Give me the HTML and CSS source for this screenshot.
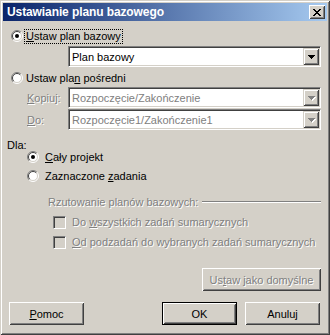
FILE: index.html
```html
<!DOCTYPE html>
<html lang="pl">
<head>
  <meta charset="UTF-8" />
  <title>Ustawianie planu bazowego</title>
  <link rel="stylesheet" href="styles.css">
</head>
<body>
  <div class="window">
    <div class="titlebar">
      <span class="title">Ustawianie planu bazowego</span>
      <button class="close" title="Zamknij">
        <svg width="8" height="7" viewBox="0 0 8 7"><path d="M0 0h2v1h-2z M6 0h2v1h-2z M1 1h2v1h-2z M5 1h2v1h-2z M2 2h4v1h-4z M3 3h2v1h-2z M2 4h4v1h-4z M1 5h2v1h-2z M5 5h2v1h-2z M0 6h2v1h-2z M6 6h2v1h-2z" fill="#000"/></svg>
      </button>
    </div>

    <div class="client">
      <div class="option opt-first">
        <span class="radio">
          <svg width="12" height="12" viewBox="0 0 12 12"><circle cx="6" cy="6" r="5" fill="#fff"/><path d="M9.9 2.1A5.5 5.5 0 0 0 2.1 9.9" fill="none" stroke="#808080"/><path d="M2.1 9.9A5.5 5.5 0 0 0 9.9 2.1" fill="none" stroke="#fff"/><path d="M9.2 2.8A4.5 4.5 0 0 0 2.8 9.2" fill="none" stroke="#404040"/><path d="M2.8 9.2A4.5 4.5 0 0 0 9.2 2.8" fill="none" stroke="#d4d0c8"/><circle cx="6" cy="6" r="2" fill="#000"/></svg>
        </span>
        <span class="label focus"><u>U</u>staw plan bazowy</span>
      </div>

      <div class="combo combo-first">
        <span class="combo-text">Plan bazowy</span>
        <span class="drop"><svg width="7" height="4" viewBox="0 0 7 4"><path d="M0 0h7v1h-1v1h-1v1h-1v1h-1v-1h-1v-1h-1v-1h-1z" fill="#000"/></svg></span>
      </div>

      <div class="option opt-second">
        <span class="radio">
          <svg width="12" height="12" viewBox="0 0 12 12"><circle cx="6" cy="6" r="5" fill="#fff"/><path d="M9.9 2.1A5.5 5.5 0 0 0 2.1 9.9" fill="none" stroke="#808080"/><path d="M2.1 9.9A5.5 5.5 0 0 0 9.9 2.1" fill="none" stroke="#fff"/><path d="M9.2 2.8A4.5 4.5 0 0 0 2.8 9.2" fill="none" stroke="#404040"/><path d="M2.8 9.2A4.5 4.5 0 0 0 9.2 2.8" fill="none" stroke="#d4d0c8"/></svg>
        </span>
        <span class="label">Ustaw pla<u>n</u> pośredni</span>
      </div>

      <div class="field field-copy">
        <span class="field-label disabled"><u>K</u>opiuj:</span>
        <div class="combo combo-off">
          <span class="combo-text">Rozpoczęcie/Zakończenie</span>
          <span class="drop"><svg width="8" height="5" viewBox="0 0 8 5"><path d="M1 1h7v1h-1v1h-1v1h-1v1h-1v-1h-1v-1h-1v-1h-1z" fill="#fff"/><path d="M0 0h7v1h-1v1h-1v1h-1v1h-1v-1h-1v-1h-1v-1h-1z" fill="#808080"/></svg></span>
        </div>
      </div>

      <div class="field field-to">
        <span class="field-label disabled"><u>D</u>o:</span>
        <div class="combo combo-off">
          <span class="combo-text">Rozpoczęcie1/Zakończenie1</span>
          <span class="drop"><svg width="8" height="5" viewBox="0 0 8 5"><path d="M1 1h7v1h-1v1h-1v1h-1v1h-1v-1h-1v-1h-1v-1h-1z" fill="#fff"/><path d="M0 0h7v1h-1v1h-1v1h-1v1h-1v-1h-1v-1h-1v-1h-1z" fill="#808080"/></svg></span>
        </div>
      </div>

      <div class="group-title">Dla:</div>

      <div class="option sub opt-all">
        <span class="radio">
          <svg width="12" height="12" viewBox="0 0 12 12"><circle cx="6" cy="6" r="5" fill="#fff"/><path d="M9.9 2.1A5.5 5.5 0 0 0 2.1 9.9" fill="none" stroke="#808080"/><path d="M2.1 9.9A5.5 5.5 0 0 0 9.9 2.1" fill="none" stroke="#fff"/><path d="M9.2 2.8A4.5 4.5 0 0 0 2.8 9.2" fill="none" stroke="#404040"/><path d="M2.8 9.2A4.5 4.5 0 0 0 9.2 2.8" fill="none" stroke="#d4d0c8"/><circle cx="6" cy="6" r="2" fill="#000"/></svg>
        </span>
        <span class="label"><u>C</u>ały projekt</span>
      </div>

      <div class="option sub opt-selected">
        <span class="radio">
          <svg width="12" height="12" viewBox="0 0 12 12"><circle cx="6" cy="6" r="5" fill="#fff"/><path d="M9.9 2.1A5.5 5.5 0 0 0 2.1 9.9" fill="none" stroke="#808080"/><path d="M2.1 9.9A5.5 5.5 0 0 0 9.9 2.1" fill="none" stroke="#fff"/><path d="M9.2 2.8A4.5 4.5 0 0 0 2.8 9.2" fill="none" stroke="#404040"/><path d="M2.8 9.2A4.5 4.5 0 0 0 9.2 2.8" fill="none" stroke="#d4d0c8"/></svg>
        </span>
        <span class="label">Zaznaczone <u>z</u>adania</span>
      </div>

      <div class="rollup">
        <span class="disabled">Rzutowanie planów bazowych:</span>
        <span class="etched"></span>
      </div>

      <div class="check-row check-first">
        <span class="check"></span>
        <span class="label disabled">Do <u>w</u>szystkich zadań sumarycznych</span>
      </div>

      <div class="check-row check-second">
        <span class="check"></span>
        <span class="label disabled"><u>O</u>d podzadań do wybranych zadań sumarycznych</span>
      </div>

      <button class="btn btn-wide" disabled><span class="disabled">Us<u>t</u>aw jako domyślne</span></button>

      <div class="buttons">
        <button class="btn btn-help"><u>P</u>omoc</button>
        <div class="btn-group">
          <button class="btn btn-primary">OK</button>
          <button class="btn">Anuluj</button>
        </div>
      </div>
    </div>
  </div>
</body>
</html>
```

FILE: styles.css
```css
* {
    margin: 0;
    padding: 0;
    box-sizing: border-box;
}

body {
    font-family: "Liberation Sans", Arial, sans-serif;
    font-size: 11px;
    color: #000;
    background: #fff;
}

.window {
    width: 330px;
    height: 335px;
    padding: 3px;
    display: flex;
    flex-direction: column;
    background: #d4d0c8;
    box-shadow: inset 1px 1px #d4d0c8, inset -1px -1px #404040, inset 2px 2px #fff, inset -2px -2px #808080;
}

/* title bar */
.titlebar {
    height: 18px;
    display: flex;
    align-items: center;
    justify-content: space-between;
    padding: 0 2px;
    background: linear-gradient(to right, #0a246a, #a6caf0);
}

.title {
    color: #fff;
    font-weight: bold;
    font-size: 12px;
    letter-spacing: -0.1px;
    padding-left: 2px;
}

.close {
    width: 16px;
    height: 14px;
    border: none;
    display: flex;
    align-items: center;
    justify-content: center;
    background: #d4d0c8;
    box-shadow: inset 1px 1px #fff, inset -1px -1px #404040, inset 2px 2px #d4d0c8, inset -2px -2px #808080;
}

/* body of the dialog */
.client {
    flex: 1;
    display: flex;
    flex-direction: column;
    padding: 0 6px 0 4px;
}

.option {
    display: flex;
    align-items: center;
    height: 16px;
    padding-left: 4px;
}

.radio {
    width: 12px;
    height: 12px;
    display: flex;
}

.label {
    line-height: 13px;
    padding: 0 1px;
    margin-left: 2px;
    white-space: nowrap;
}

.focus {
    outline: 1px dotted #000;
}

.opt-first {
    margin-top: 7px;
}

.opt-second {
    margin-top: 3px;
}

.option.sub {
    height: 12px;
    padding-left: 20px;
}

.option.sub .label {
    margin-left: 5px;
}

.opt-all {
    margin-top: 0;
}

.opt-selected {
    margin-top: 7px;
}

.disabled {
    color: #808080;
    text-shadow: 1px 1px 0 #fff;
}

/* combo boxes */
.combo {
    width: 253px;
    height: 21px;
    align-self: flex-end;
    display: flex;
    align-items: center;
    justify-content: space-between;
    padding: 1px;
    background: #fff;
    border: 1px solid;
    border-color: #808080 #fff #fff #808080;
    box-shadow: inset 1px 1px #404040, inset -1px -1px #d4d0c8;
}

.combo-first {
    margin-top: 2px;
}

.combo-text {
    padding-left: 2px;
    white-space: nowrap;
}

.combo-off .combo-text {
    color: #808080;
}

.drop {
    width: 16px;
    height: 17px;
    display: flex;
    align-items: center;
    justify-content: center;
    background: #d4d0c8;
    box-shadow: inset 1px 1px #d4d0c8, inset -1px -1px #404040, inset 2px 2px #fff, inset -2px -2px #808080;
}

.combo-off .drop svg {
    margin: 1px 0 0 1px;
}

.field {
    display: flex;
    align-items: center;
    justify-content: space-between;
    margin-top: 1px;
}

.field-label {
    padding-left: 20px;
}

.group-title {
    margin-top: 10px;
    height: 11px;
    line-height: 11px;
}

/* projection of baselines */
.rollup {
    display: flex;
    align-items: center;
    height: 12px;
    margin-top: 14px;
    padding-left: 41px;
    white-space: nowrap;
}

.etched {
    flex: 1;
    height: 2px;
    margin-left: 4px;
    border-top: 1px solid #808080;
    border-bottom: 1px solid #fff;
}

.check-row {
    display: flex;
    align-items: center;
    height: 13px;
    padding-left: 46px;
}

.check-row .label {
    margin-left: 5px;
}

.check-first {
    margin-top: 8px;
}

.check-second {
    margin-top: 7px;
}

.check {
    width: 13px;
    height: 13px;
    background: #d4d0c8;
    border: 1px solid;
    border-color: #808080 #fff #fff #808080;
    box-shadow: inset 1px 1px #404040, inset -1px -1px #d4d0c8;
}

/* buttons */
.btn {
    width: 75px;
    height: 23px;
    border: none;
    font: inherit;
    color: #000;
    background: #d4d0c8;
    box-shadow: inset 1px 1px #fff, inset -1px -1px #404040, inset 2px 2px #d4d0c8, inset -2px -2px #808080;
}

.btn-wide {
    width: 119px;
    align-self: flex-end;
    margin-top: 19px;
}

.btn-primary {
    box-shadow: inset 0 0 0 1px #000, inset 2px 2px #fff, inset -2px -2px #404040, inset 3px 3px #d4d0c8, inset -3px -3px #808080;
}

.buttons {
    display: flex;
    justify-content: space-between;
    margin-top: 11px;
    padding: 0 1px 0 2px;
}

.btn-group {
    display: flex;
    gap: 8px;
}
```
